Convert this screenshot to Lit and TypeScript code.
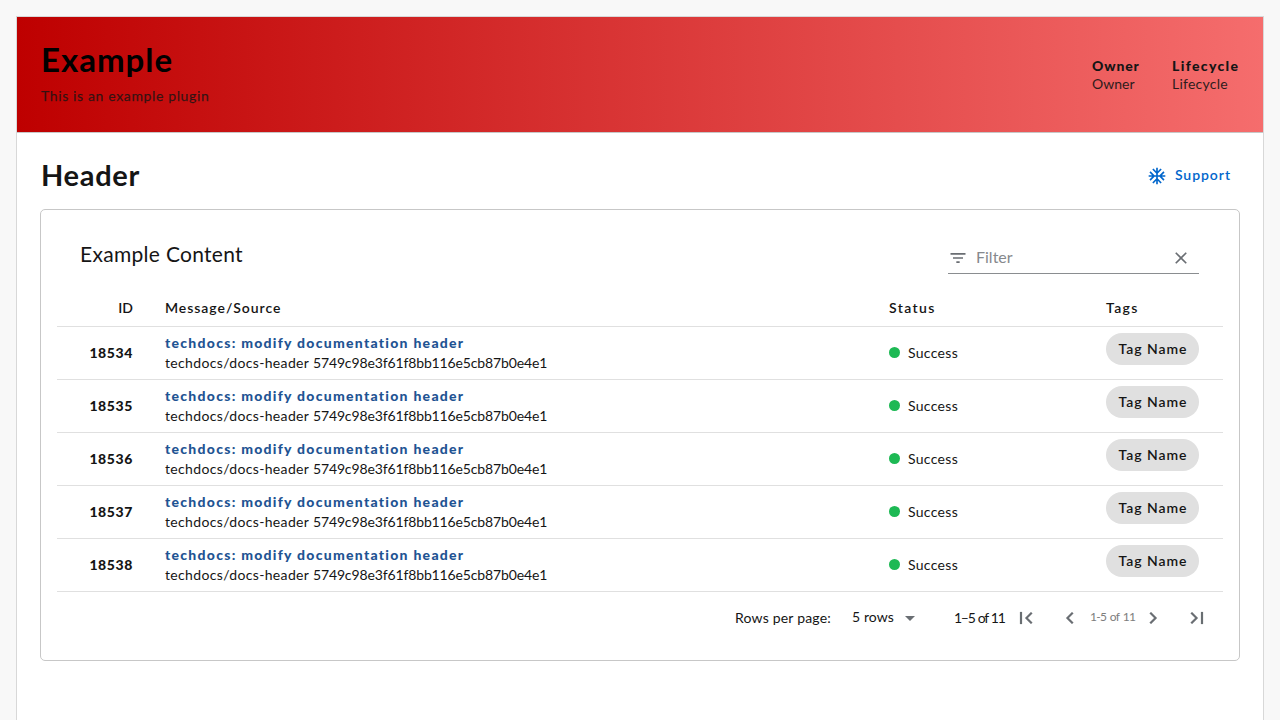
import { LitElement, html, css } from "lit";
import { customElement } from "lit/decorators.js";

const icon = (path: string, cls = "icon") =>
  html`<svg class=${cls} viewBox="0 0 24 24" aria-hidden="true"><path d=${path}></path></svg>`;

const SNOW =
  "M22 11h-4.17l3.24-3.24-1.41-1.42L15 11h-2V9l4.66-4.66-1.42-1.41L13 6.17V2h-2v4.17L7.76 2.93 6.34 4.34 11 9v2H9L4.34 6.34 2.93 7.76 6.17 11H2v2h4.17l-3.24 3.24 1.41 1.42L9 13h2v2l-4.66 4.66 1.42 1.41L11 17.83V22h2v-4.17l3.24 3.24 1.42-1.41L13 15v-2h2l4.66 4.66 1.41-1.42L17.83 13H22z";
const FILTER = "M10 18h4v-2h-4v2zM3 6v2h18V6H3zm3 7h12v-2H6v2z";
const CLEAR =
  "M19 6.41L17.59 5 12 10.59 6.41 5 5 6.41 10.59 12 5 17.59 6.41 19 12 13.41 17.59 19 19 17.59 13.41 12z";
const FIRST = "M18.41 16.59L13.82 12l4.59-4.59L17 6l-6 6 6 6zM6 6h2v12H6z";
const PREV = "M15.41 7.41L14 6l-6 6 6 6 1.41-1.41L10.83 12z";
const NEXT = "M10 6L8.59 7.41 13.17 12l-4.58 4.59L10 18l6-6z";
const LAST = "M5.59 7.41L10.18 12l-4.59 4.59L7 18l6-6-6-6zM16 6h2v12h-2z";
const DROP = "M7 10l5 5 5-5z";

@customElement("app-root")
export class AppRoot extends LitElement {
  static styles = css`
    :host {
      display: block;
      box-sizing: border-box;
      height: 720px;
      padding: 16px 16px 0;
      overflow: hidden;
      background: #f8f8f8;
      color: #151515;
      font: 14px/20px Lato, sans-serif;
    }
    * { box-sizing: border-box; }
    h1, h2, h3, p { margin: 0; }
    .page { height: 760px; background: #fff; border: 1px solid #d8d8d8; }
    .banner {
      height: 116px;
      display: flex;
      align-items: center;
      justify-content: space-between;
      padding: 0 24px;
      border-bottom: 1px solid #c7c7c7;
      background: linear-gradient(90deg, #be0000 0%, #f56d6d 100%);
    }
    .intro { padding-bottom: 4px; }
    .title { font-size: 33px; line-height: 38px; font-weight: 700; color: #000; letter-spacing: 1px; }
    .subtitle {
      margin-top: 8px;
      color: rgba(21, 21, 21, 0.8);
      letter-spacing: 0.63px;
      -webkit-text-stroke: 0.25px rgba(21, 21, 21, 0.8);
    }
    .facts { display: flex; gap: 32px; line-height: 18px; }
    .facts b { display: block; font-weight: 900; white-space: nowrap; }
    .owner { width: 48px; }
    .owner b { letter-spacing: 0.85px; }
    .life { width: 67px; }
    .life b { letter-spacing: 1.35px; }
    .life span { letter-spacing: 0.25px; }
    .facts span { opacity: 0.9; }
    .content { padding: 24px 23px; }
    .heading { height: 40px; display: flex; justify-content: space-between; align-items: center; padding: 0 0 4px 1px; }
    .heading h2 { font-size: 29px; line-height: 36px; font-weight: 700; letter-spacing: 0.7px; }
    .support {
      display: flex;
      align-items: center;
      gap: 8px;
      padding-right: 9px;
      color: #0066cc;
      font-weight: 600;
      letter-spacing: 0.95px;
    }
    .support svg { margin-top: 2px; }
    .icon { display: block; width: 20px; height: 20px; fill: currentColor; flex: none; }
    .large { width: 24px; height: 24px; display: block; fill: currentColor; flex: none; }
    .card {
      margin-top: 12px;
      height: 452px;
      border: 1px solid #c7c7c7;
      border-radius: 5px;
      padding: 16px;
    }
    .toolbar { height: 64px; display: flex; justify-content: space-between; padding: 0 24px 0 23px; }
    .toolbar h3 { font-size: 21px; line-height: 28px; font-weight: 400; margin-top: 14px; letter-spacing: 0.3px; }
    .filter {
      width: 251px;
      height: 32px;
      margin-top: 16px;
      display: flex;
      align-items: center;
      gap: 8px;
      border-bottom: 1px solid #8a8d90;
      color: #6a6e73;
      font-size: 16px;
    }
    .filter .hint { flex: 1; color: #86898d; padding-bottom: 1px; }
    .filter .clear { margin-right: 8px; }
    .row {
      display: grid;
      grid-template-columns: 92px 724px 217px 133px;
      height: 53px;
      border-bottom: 1px solid #e0e0e0;
      align-items: center;
    }
    .row > div { padding: 0 16px; }
    .head { height: 37px; font-weight: 600; letter-spacing: 1.4px; }
    .head .id { letter-spacing: 0; }
    .head .message { letter-spacing: 0.95px; }
    .id { text-align: right; }
    .row:not(.head) .id { font-weight: 900; letter-spacing: 0.6px; }
    .name { color: #1f5493; font-weight: 900; letter-spacing: 1.27px; }
    .path { letter-spacing: 0.35px; }
    .hash { letter-spacing: -0.13px; }
    .status { display: flex; align-items: center; gap: 8px; letter-spacing: 0.3px; }
    .dot { width: 11px; height: 11px; border-radius: 50%; background: #1db954; margin-top: -1px; }
    .chip {
      display: flex;
      align-items: center;
      justify-content: center;
      width: 93px;
      height: 32px;
      margin-bottom: 8px;
      padding-left: 1px;
      border-radius: 16px;
      background: #e0e0e0;
      font-weight: 600;
      letter-spacing: 0.95px;
    }
    .pager {
      height: 52px;
      display: flex;
      align-items: center;
      padding-right: 14px;
      justify-content: flex-end;
      white-space: nowrap;
    }
    .pager svg { color: #6a6e73; stroke: currentColor; stroke-width: 0.2px; }
    .pager .drop svg { stroke: none; }
    .perpage { width: 117px; letter-spacing: 0.2px; }
    .rows { width: 46px; margin-top: -2px; letter-spacing: 0.1px; }
    .drop { width: 56px; }
    .range { width: 60px; letter-spacing: -1.3px; word-spacing: 1px; }
    .first { width: 44px; }
    .prev { width: 32px; }
    .mid { width: 51px; font-size: 12px; letter-spacing: -0.65px; word-spacing: 1px; color: #7d7d7d; margin-top: -2px; }
    .next { width: 44px; }
  `;

  private rows = ["18534", "18535", "18536", "18537", "18538"];

  render() {
    return html`
      <main class="page">
        <header class="banner">
          <div class="intro">
            <h1 class="title">Example</h1>
            <p class="subtitle">This is an example plugin</p>
          </div>
          <div class="facts">
            <div class="owner"><b>Owner</b><span>Owner</span></div>
            <div class="life"><b>Lifecycle</b><span>Lifecycle</span></div>
          </div>
        </header>
        <section class="content">
          <div class="heading">
            <h2>Header</h2>
            <div class="support">${icon(SNOW)}<span>Support</span></div>
          </div>
          <div class="card">
            <div class="toolbar">
              <h3>Example Content</h3>
              <div class="filter">
                ${icon(FILTER)}<span class="hint">Filter</span>
                <span class="clear">${icon(CLEAR)}</span>
              </div>
            </div>
            <div class="row head">
              <div class="id">ID</div>
              <div class="message">Message/Source</div>
              <div>Status</div>
              <div>Tags</div>
            </div>
            ${this.rows.map(
              (id) => html`<div class="row">
                <div class="id">${id}</div>
                <div>
                  <p class="name">techdocs: modify documentation header</p>
                  <p>
                    <span class="path">techdocs/docs-header</span>
                    <span class="hash">5749c98e3f61f8bb116e5cb87b0e4e1</span>
                  </p>
                </div>
                <div class="status"><span class="dot"></span><span>Success</span></div>
                <div><span class="chip">Tag Name</span></div>
              </div>`
            )}
            <div class="pager">
              <span class="perpage">Rows per page:</span>
              <span class="rows">5 rows</span>
              <span class="drop">${icon(DROP, "large")}</span>
              <span class="range">1–5 of 11</span>
              <span class="first">${icon(FIRST, "large")}</span>
              <span class="prev">${icon(PREV, "large")}</span>
              <span class="mid">1-5 of 11</span>
              <span class="next">${icon(NEXT, "large")}</span>
              ${icon(LAST, "large")}
            </div>
          </div>
        </section>
      </main>
    `;
  }
}
